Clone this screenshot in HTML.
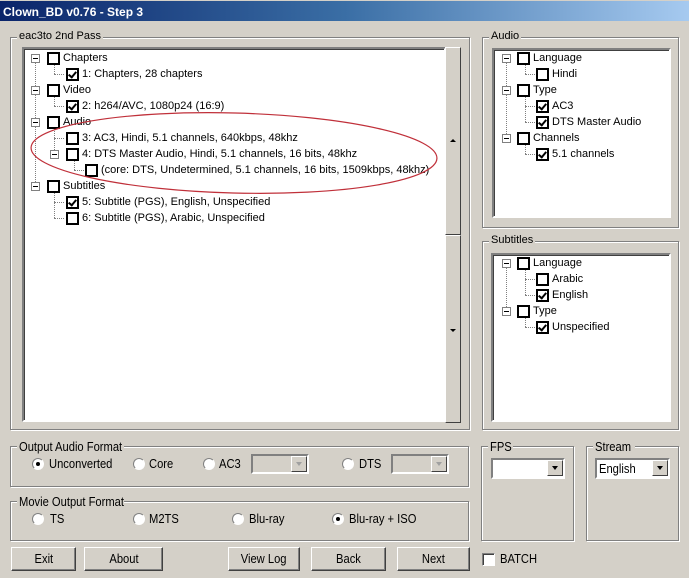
<!DOCTYPE html>
<html><head><style>
*{box-sizing:border-box}
body{margin:0;width:689px;height:578px;background:#d4d0c8;font-family:"Liberation Sans",sans-serif;font-size:11px;color:#000;position:relative;overflow:hidden}
.a{position:absolute}
.title{left:0;top:0;width:689px;height:21px;background:linear-gradient(90deg,#0a246a,#3a6ea5 50%,#a6caf0);color:#fff;font-weight:bold;font-size:12px;padding:4px 0 0 3px;border-top:1px solid #d4d0c8}
.grp{border:1px solid #808080;box-shadow:1px 1px 0 #fff, inset 1px 1px 0 #fff}
.lg{background:#d4d0c8;padding:0 2px;top:-8px;left:6px;position:absolute;white-space:nowrap}
.tree{background:#fff;border:2px solid;border-color:#808080 #fff #fff #808080;box-shadow:inset 1px 1px 0 #404040}
.cb{position:absolute;width:13px;height:13px;border:2px solid #000;background:#fff}
.cb.k::after{content:"";position:absolute;left:2px;top:0px;width:3px;height:6px;border:solid #000;border-width:0 2px 2px 0;transform:rotate(40deg)}
.ex{position:absolute;width:9px;height:9px;border:1px solid #808080;background:#fff}
.ex::after{content:"";position:absolute;left:1px;top:3px;width:5px;height:1px;background:#000}
.t{position:absolute;white-space:nowrap;top:0}
.n{position:absolute;white-space:nowrap;font-size:13px;transform:scaleX(.86);transform-origin:left top}
.vl{position:absolute;border-left:1px dotted #808080}
.hl{position:absolute;border-top:1px dotted #808080}
.btn{position:absolute;height:24px;border:1px solid;border-color:#fff #404040 #404040 #fff;box-shadow:inset -1px -1px 0 #808080;text-align:center;line-height:21px;font-size:13px}
.btn span{display:inline-block;transform:scaleX(.86)}
.rd{position:absolute;width:12px;height:12px;border-radius:50%;background:#fff;border:1px solid;border-color:#808080 #fff #fff #808080}
.rd.on::after{content:"";position:absolute;left:3px;top:3px;width:4px;height:4px;border-radius:50%;background:#000}
.combo{position:absolute;height:20px;border:2px solid;border-color:#808080 #fff #fff #808080;background:#fff}
.combo .ar{position:absolute;right:0;top:0;width:16px;height:16px;background:#d4d0c8;border:1px solid;border-color:#fff #404040 #404040 #fff}
.combo .ar::after{content:"";position:absolute;left:4px;top:5px;border:3px solid transparent;border-top:4px solid #000}
.combo.dis{background:#d4d0c8}
.combo.dis .ar::after{border-top-color:#a0a0a0}
</style></head><body>
<div class="a title">Clown_BD v0.76 - Step 3</div>

<div class="a grp" style="left:10px;top:37px;width:460px;height:393px"><span class="lg">eac3to 2nd Pass</span></div>
<div class="a tree" style="left:22px;top:47px;width:424px;height:375px"></div>
<div class="a" style="left:445px;top:47px;width:16px;height:188px;border:1px solid;border-color:#fff #404040 #404040 #fff;background:#d4d0c8"><div class="a" style="left:4px;top:91px;border:3px solid transparent;border-bottom:3px solid #000;border-top:0"></div></div>
<div class="a" style="left:445px;top:235px;width:16px;height:188px;border:1px solid;border-color:#fff #404040 #404040 #fff;background:#d4d0c8"><div class="a" style="left:4px;top:93px;border:3px solid transparent;border-top:3px solid #000;border-bottom:0"></div></div>

<div class="vl" style="left:35px;top:62px;height:124px"></div>
<div class="vl" style="left:54px;top:65px;height:9px"></div><div class="hl" style="left:54px;top:74px;width:10px"></div>
<div class="vl" style="left:54px;top:97px;height:9px"></div><div class="hl" style="left:54px;top:106px;width:10px"></div>
<div class="vl" style="left:54px;top:129px;height:25px"></div><div class="hl" style="left:54px;top:138px;width:10px"></div>
<div class="vl" style="left:74px;top:161px;height:9px"></div><div class="hl" style="left:74px;top:170px;width:10px"></div>
<div class="vl" style="left:54px;top:193px;height:25px"></div><div class="hl" style="left:54px;top:202px;width:10px"></div><div class="hl" style="left:54px;top:218px;width:10px"></div>

<div class="ex" style="left:31px;top:54px"></div><div class="cb" style="left:47px;top:52px"></div><div class="t" style="left:63px;top:52px">Chapters</div>
<div class="cb k" style="left:66px;top:68px"></div><div class="t" style="left:82px;top:68px">1: Chapters, 28 chapters</div>
<div class="ex" style="left:31px;top:86px"></div><div class="cb" style="left:47px;top:84px"></div><div class="t" style="left:63px;top:84px">Video</div>
<div class="cb k" style="left:66px;top:100px"></div><div class="t" style="left:82px;top:100px">2: h264/AVC, 1080p24 (16:9)</div>
<div class="ex" style="left:31px;top:118px"></div><div class="cb" style="left:47px;top:116px"></div><div class="t" style="left:63px;top:116px">Audio</div>
<div class="cb" style="left:66px;top:132px"></div><div class="t" style="left:82px;top:132px">3: AC3, Hindi, 5.1 channels, 640kbps, 48khz</div>
<div class="ex" style="left:50px;top:150px"></div><div class="cb" style="left:66px;top:148px"></div><div class="t" style="left:82px;top:148px">4: DTS Master Audio, Hindi, 5.1 channels, 16 bits, 48khz</div>
<div class="cb" style="left:85px;top:164px"></div><div class="t" style="left:101px;top:164px">(core: DTS, Undetermined, 5.1 channels, 16 bits, 1509kbps, 48khz)</div>
<div class="ex" style="left:31px;top:182px"></div><div class="cb" style="left:47px;top:180px"></div><div class="t" style="left:63px;top:180px">Subtitles</div>
<div class="cb k" style="left:66px;top:196px"></div><div class="t" style="left:82px;top:196px">5: Subtitle (PGS), English, Unspecified</div>
<div class="cb" style="left:66px;top:212px"></div><div class="t" style="left:82px;top:212px">6: Subtitle (PGS), Arabic, Unspecified</div>

<svg class="a" style="left:0;top:0" width="689" height="578"><ellipse cx="234" cy="153" rx="203" ry="40" fill="none" stroke="#c0303a" stroke-width="1.2" transform="rotate(1.5 234 153)"/></svg>

<div class="a grp" style="left:482px;top:37px;width:197px;height:191px"><span class="lg">Audio</span></div>
<div class="a tree" style="left:492px;top:48px;width:179px;height:170px"></div>
<div class="vl" style="left:506px;top:62px;height:76px"></div>
<div class="vl" style="left:525px;top:65px;height:9px"></div><div class="hl" style="left:525px;top:74px;width:10px"></div>
<div class="vl" style="left:525px;top:97px;height:25px"></div><div class="hl" style="left:525px;top:106px;width:10px"></div><div class="hl" style="left:525px;top:122px;width:10px"></div>
<div class="vl" style="left:525px;top:145px;height:9px"></div><div class="hl" style="left:525px;top:154px;width:10px"></div>
<div class="ex" style="left:502px;top:54px"></div><div class="cb" style="left:517px;top:52px"></div><div class="t" style="left:533px;top:52px">Language</div>
<div class="cb" style="left:536px;top:68px"></div><div class="t" style="left:552px;top:68px">Hindi</div>
<div class="ex" style="left:502px;top:86px"></div><div class="cb" style="left:517px;top:84px"></div><div class="t" style="left:533px;top:84px">Type</div>
<div class="cb k" style="left:536px;top:100px"></div><div class="t" style="left:552px;top:100px">AC3</div>
<div class="cb k" style="left:536px;top:116px"></div><div class="t" style="left:552px;top:116px">DTS Master Audio</div>
<div class="ex" style="left:502px;top:134px"></div><div class="cb" style="left:517px;top:132px"></div><div class="t" style="left:533px;top:132px">Channels</div>
<div class="cb k" style="left:536px;top:148px"></div><div class="t" style="left:552px;top:148px">5.1 channels</div>

<div class="a grp" style="left:482px;top:241px;width:197px;height:189px"><span class="lg">Subtitles</span></div>
<div class="a tree" style="left:491px;top:253px;width:180px;height:169px"></div>
<div class="vl" style="left:506px;top:267px;height:44px"></div>
<div class="vl" style="left:525px;top:270px;height:25px"></div><div class="hl" style="left:525px;top:279px;width:10px"></div><div class="hl" style="left:525px;top:295px;width:10px"></div>
<div class="vl" style="left:525px;top:318px;height:9px"></div><div class="hl" style="left:525px;top:327px;width:10px"></div>
<div class="ex" style="left:502px;top:259px"></div><div class="cb" style="left:517px;top:257px"></div><div class="t" style="left:533px;top:257px">Language</div>
<div class="cb" style="left:536px;top:273px"></div><div class="t" style="left:552px;top:273px">Arabic</div>
<div class="cb k" style="left:536px;top:289px"></div><div class="t" style="left:552px;top:289px">English</div>
<div class="ex" style="left:502px;top:307px"></div><div class="cb" style="left:517px;top:305px"></div><div class="t" style="left:533px;top:305px">Type</div>
<div class="cb k" style="left:536px;top:321px"></div><div class="t" style="left:552px;top:321px">Unspecified</div>

<div class="a grp" style="left:10px;top:446px;width:459px;height:41px"><span class="lg"><span class="n" style="position:relative;display:inline-block;width:103px;left:0">Output Audio Format</span></span></div>
<div class="rd on" style="left:32px;top:458px"></div><div class="n" style="left:49px;top:456px">Unconverted</div>
<div class="rd" style="left:133px;top:458px"></div><div class="n" style="left:149px;top:456px">Core</div>
<div class="rd" style="left:203px;top:458px"></div><div class="n" style="left:219px;top:456px">AC3</div>
<div class="combo dis" style="left:251px;top:454px;width:58px"><div class="ar"></div></div>
<div class="rd" style="left:342px;top:458px"></div><div class="n" style="left:359px;top:456px">DTS</div>
<div class="combo dis" style="left:391px;top:454px;width:58px"><div class="ar"></div></div>

<div class="a grp" style="left:10px;top:501px;width:459px;height:40px"><span class="lg"><span class="n" style="position:relative;display:inline-block;width:103px;left:0">Movie Output Format</span></span></div>
<div class="rd" style="left:32px;top:513px"></div><div class="n" style="left:50px;top:511px">TS</div>
<div class="rd" style="left:133px;top:513px"></div><div class="n" style="left:149px;top:511px">M2TS</div>
<div class="rd" style="left:232px;top:513px"></div><div class="n" style="left:249px;top:511px">Blu-ray</div>
<div class="rd on" style="left:332px;top:513px"></div><div class="n" style="left:349px;top:511px">Blu-ray + ISO</div>

<div class="a grp" style="left:481px;top:446px;width:93px;height:95px"><span class="lg"><span class="n" style="position:relative;display:inline-block;width:21px;left:0">FPS</span></span></div>
<div class="combo" style="left:491px;top:458px;width:74px;height:21px"><div class="ar"></div></div>
<div class="a grp" style="left:586px;top:446px;width:93px;height:95px"><span class="lg"><span class="n" style="position:relative;display:inline-block;width:38px;left:0">Stream</span></span></div>
<div class="combo" style="left:595px;top:458px;width:75px;height:21px"><div class="ar"></div><span class="n" style="left:2px;top:1px">English</span></div>

<div class="btn" style="left:11px;top:547px;width:65px"><span>Exit</span></div>
<div class="btn" style="left:84px;top:547px;width:79px"><span>About</span></div>
<div class="btn" style="left:228px;top:547px;width:72px"><span>View Log</span></div>
<div class="btn" style="left:311px;top:547px;width:75px"><span>Back</span></div>
<div class="btn" style="left:397px;top:547px;width:73px"><span>Next</span></div>
<div class="a" style="left:482px;top:553px;width:13px;height:13px;background:#fff;border:1px solid;border-color:#808080 #fff #fff #808080;box-shadow:inset 1px 1px 0 #404040"></div>
<div class="n" style="left:500px;top:551px">BATCH</div>
</body></html>
